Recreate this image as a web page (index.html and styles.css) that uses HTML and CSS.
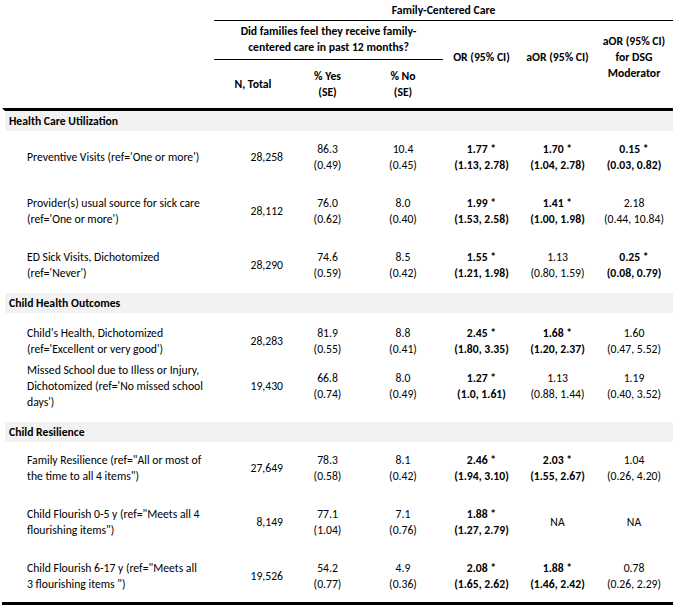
FILE: index.html
```html
<!DOCTYPE html>
<html>
<head>
<meta charset="utf-8">
<link rel="stylesheet" href="styles.css">
</head>
<body>
<table class="tbl">
  <colgroup>
    <col class="c-label"><col class="c-n"><col class="c-yes"><col class="c-no"><col class="c-or"><col class="c-aor"><col class="c-dsg">
  </colgroup>
  <thead>
    <tr class="h1">
      <td class="blank"></td>
      <th colspan="6" class="fcc">Family-Centered Care</th>
    </tr>
    <tr class="h2">
      <td rowspan="2" class="blank"></td>
      <th colspan="3" class="span3">Did families feel they receive family-<br>centered care in past 12 months?</th>
      <th rowspan="2" class="stat">OR (95% CI)</th>
      <th rowspan="2" class="stat">aOR (95% CI)</th>
      <th rowspan="2" class="stat">aOR (95% CI)<br>for DSG<br>Moderator</th>
    </tr>
    <tr class="h3">
      <th>N, Total</th>
      <th>% Yes<br>(SE)</th>
      <th>% No<br>(SE)</th>
    </tr>
  </thead>
  <tbody>
    <tr class="sec first"><td colspan="7">Health Care Utilization</td></tr>
    <tr class="row">
      <td class="lbl">Preventive Visits (ref='One or more')</td>
      <td class="n">28,258</td>
      <td>86.3<br>(0.49)</td>
      <td class="no">10.4<br>(0.45)</td>
      <td class="or"><b>1.77 *<br>(1.13, 2.78)</b></td>
      <td class="aor"><b>1.70 *<br>(1.04, 2.78)</b></td>
      <td><b>0.15 *<br>(0.03, 0.82)</b></td>
    </tr>
    <tr class="row">
      <td class="lbl">Provider(s) usual source for sick care<br>(ref='One or more')</td>
      <td class="n">28,112</td>
      <td>76.0<br>(0.62)</td>
      <td class="no">8.0<br>(0.40)</td>
      <td class="or"><b>1.99 *<br>(1.53, 2.58)</b></td>
      <td class="aor"><b>1.41 *<br>(1.00, 1.98)</b></td>
      <td>2.18<br>(0.44, 10.84)</td>
    </tr>
    <tr class="row">
      <td class="lbl">ED Sick Visits, Dichotomized<br>(ref='Never')</td>
      <td class="n">28,290</td>
      <td>74.6<br>(0.59)</td>
      <td class="no">8.5<br>(0.42)</td>
      <td class="or"><b>1.55 *<br>(1.21, 1.98)</b></td>
      <td class="aor">1.13<br>(0.80, 1.59)</td>
      <td><b>0.25 *<br>(0.08, 0.79)</b></td>
    </tr>
    <tr class="sec"><td colspan="7">Child Health Outcomes</td></tr>
    <tr class="row row-a">
      <td class="lbl">Child's Health, Dichotomized<br>(ref='Excellent or very good')</td>
      <td class="n">28,283</td>
      <td>81.9<br>(0.55)</td>
      <td class="no">8.8<br>(0.41)</td>
      <td class="or"><b>2.45 *<br>(1.80, 3.35)</b></td>
      <td class="aor"><b>1.68 *<br>(1.20, 2.37)</b></td>
      <td>1.60<br>(0.47, 5.52)</td>
    </tr>
    <tr class="row row-b">
      <td class="lbl">Missed School due to Illess or Injury,<br>Dichotomized (ref='No missed school<br>days')</td>
      <td class="n">19,430</td>
      <td>66.8<br>(0.74)</td>
      <td class="no">8.0<br>(0.49)</td>
      <td class="or"><b>1.27 *<br>(1.0, 1.61)</b></td>
      <td class="aor">1.13<br>(0.88, 1.44)</td>
      <td>1.19<br>(0.40, 3.52)</td>
    </tr>
    <tr class="sec"><td colspan="7">Child Resilience</td></tr>
    <tr class="row">
      <td class="lbl">Family Resilience (ref="All or most of<br>the time to all 4 items")</td>
      <td class="n">27,649</td>
      <td>78.3<br>(0.58)</td>
      <td class="no">8.1<br>(0.42)</td>
      <td class="or"><b>2.46 *<br>(1.94, 3.10)</b></td>
      <td class="aor"><b>2.03 *<br>(1.55, 2.67)</b></td>
      <td>1.04<br>(0.26, 4.20)</td>
    </tr>
    <tr class="row">
      <td class="lbl">Child Flourish 0-5 y (ref="Meets all 4<br>flourishing items")</td>
      <td class="n">8,149</td>
      <td>77.1<br>(1.04)</td>
      <td class="no">7.1<br>(0.76)</td>
      <td class="or"><b>1.88 *<br>(1.27, 2.79)</b></td>
      <td class="aor">NA</td>
      <td>NA</td>
    </tr>
    <tr class="row last">
      <td class="lbl">Child Flourish 6-17 y (ref="Meets all<br>3 flourishing items ")</td>
      <td class="n">19,526</td>
      <td>54.2<br>(0.77)</td>
      <td class="no">4.9<br>(0.36)</td>
      <td class="or"><b>2.08 *<br>(1.65, 2.62)</b></td>
      <td class="aor"><b>1.88 *<br>(1.46, 2.42)</b></td>
      <td>0.78<br>(0.26, 2.29)</td>
    </tr>
  </tbody>
</table>
</body>
</html>
```
FILE: styles.css
```css
html, body {
  margin: 0;
  padding: 0;
  background: #ffffff;
}
body {
  font-family: Carlito, Calibri, Lato, "Liberation Sans", sans-serif;
  font-size: 11.7px;
  color: #000000;
}
.tbl {
  border-collapse: separate;
  border-spacing: 0;
  margin-left: 2px;
  width: 671px;
  table-layout: fixed;
}
.c-label { width: 212px; }
.c-n { width: 78px; }
.c-yes { width: 71px; }
.c-no { width: 80px; }
.c-or { width: 77px; }
.c-aor { width: 75px; }
.c-dsg { width: 78px; }

.tbl td, .tbl th {
  padding: 0;
  line-height: 16px;
  text-align: center;
  white-space: nowrap;
  vertical-align: middle;
}
.tbl th { font-weight: bold; }
.tbl b { font-weight: bold; }

.tbl .h1 th { padding: 2px 0; }
.tbl th.fcc { border-bottom: 1px solid #000; }
.tbl th.span3 {
  padding: 2px 0 4px;
  border-bottom: 1px solid #000;
}
.tbl th.stat { padding-bottom: 16px; }
.tbl .h3 th { padding: 8px 0; }

.tbl .sec td {
  padding: 2px 0 2px 4px;
  background: #f2f2f2;
  font-weight: bold;
  text-align: left;
  border-left: 3px solid #ffffff;
}
.tbl .sec.first td { border-top: 3px solid #000; }

.tbl .row td { padding: 10px 0 12px; }
.tbl .row td.lbl { text-align: left; padding-left: 25px; }
.tbl .row td.n { text-align: right; padding-right: 9px; }
.tbl .row-a td { padding-top: 12px; padding-bottom: 2px; }
.tbl .row-b td { padding-top: 3px; padding-bottom: 12px; }
.tbl .last td { padding-bottom: 10px; border-bottom: 3px solid #000; }
```
